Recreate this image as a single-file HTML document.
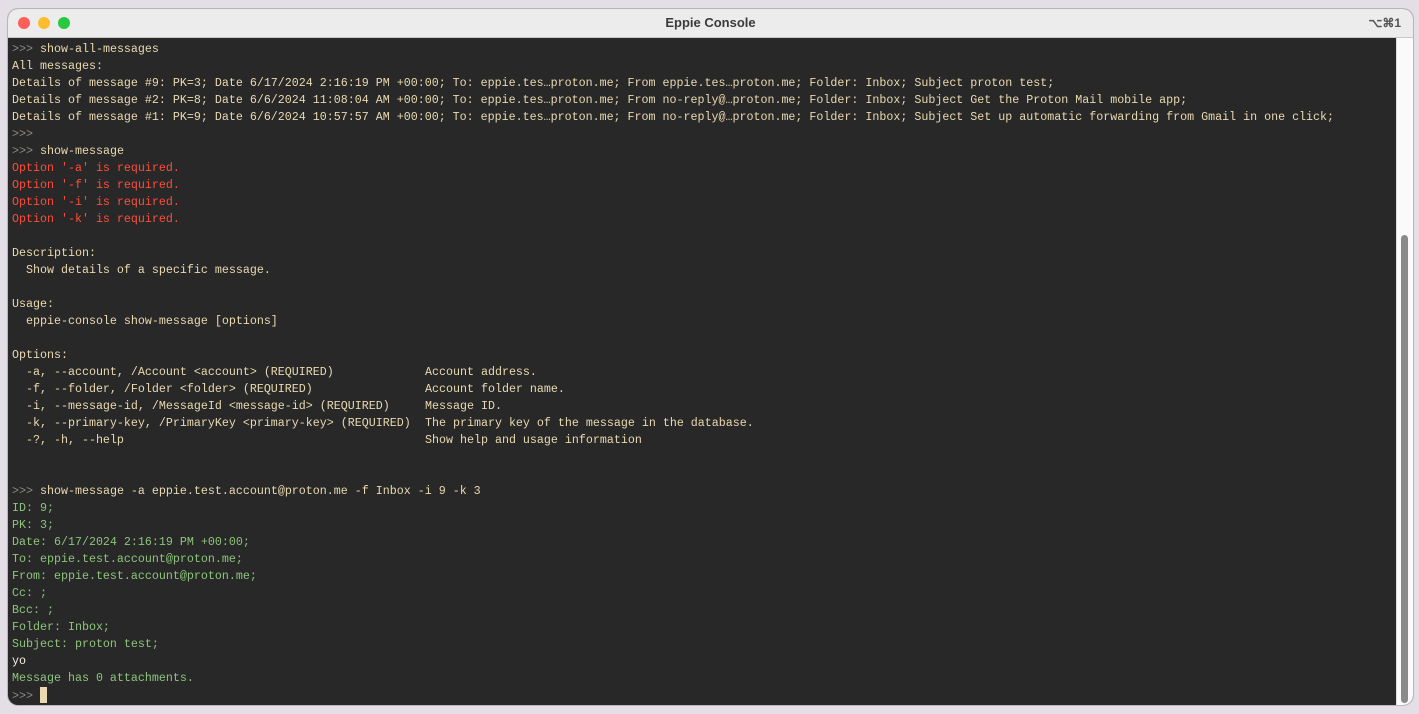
<!DOCTYPE html>
<html><head><meta charset="utf-8"><style>
html,body{margin:0;padding:0;width:1419px;height:714px;overflow:hidden;background:#e4dfe6;}
.win{position:absolute;left:8px;top:9px;width:1405px;height:696px;border-radius:10px;overflow:hidden;background:#282828;box-shadow:0 0 0 1px #b9b6bb;}
.tb{position:absolute;left:0;top:0;right:0;height:28px;background:#ececec;border-bottom:1px solid #c9c9c9;font:bold 13px "Liberation Sans",sans-serif;color:#3a3a3a;text-align:center;line-height:28px;}
.dot{position:absolute;top:8px;width:12px;height:12px;border-radius:50%;}
.sc{position:absolute;right:12px;top:0;font-size:12px;color:#555;}
.term{position:absolute;left:4px;top:32px;font:11.67px/17px "Liberation Mono",monospace;color:#ead9b0;white-space:pre;}
.p{color:#8e8a86}.r{color:#ff4c3b}.g{color:#8cc47b}.w{color:#f6f0e0}
.c{display:inline-block;width:413px}
.sb{position:absolute;right:0;top:29px;width:16px;bottom:0;background:#fafafa;border-left:1px solid #e0e0e0;}
.th{position:absolute;left:4px;width:7px;top:197px;bottom:2px;background:#8a8a8a;border-radius:4px;}
.cur{display:inline-block;width:7px;height:16px;background:#ead9b0;vertical-align:-4px;}
</style></head><body>
<div class="win">
<div class="tb">Eppie Console<div class="dot" style="left:10px;background:#fe5f57"></div><div class="dot" style="left:30px;background:#febc2e"></div><div class="dot" style="left:50px;background:#28c840"></div><span class="sc">⌥⌘1</span></div>
<div class="term"><span class="p">&gt;&gt;&gt;</span> show-all-messages
All messages:
Details of message #9: PK=3; Date 6/17/2024 2:16:19 PM +00:00; To: eppie.tes…proton.me; From eppie.tes…proton.me; Folder: Inbox; Subject proton test;
Details of message #2: PK=8; Date 6/6/2024 11:08:04 AM +00:00; To: eppie.tes…proton.me; From no-reply@…proton.me; Folder: Inbox; Subject Get the Proton Mail mobile app;
Details of message #1: PK=9; Date 6/6/2024 10:57:57 AM +00:00; To: eppie.tes…proton.me; From no-reply@…proton.me; Folder: Inbox; Subject Set up automatic forwarding from Gmail in one click;
<span class="p">&gt;&gt;&gt;</span>
<span class="p">&gt;&gt;&gt;</span> show-message
<span class="r">Option '-a' is required.
Option '-f' is required.
Option '-i' is required.
Option '-k' is required.</span>

Description:
  Show details of a specific message.

Usage:
  eppie-console show-message [options]

Options:
<span class="c">  -a, --account, /Account &lt;account&gt; (REQUIRED)</span>Account address.
<span class="c">  -f, --folder, /Folder &lt;folder&gt; (REQUIRED)</span>Account folder name.
<span class="c">  -i, --message-id, /MessageId &lt;message-id&gt; (REQUIRED)</span>Message ID.
<span class="c">  -k, --primary-key, /PrimaryKey &lt;primary-key&gt; (REQUIRED)</span>The primary key of the message in the database.
<span class="c">  -?, -h, --help</span>Show help and usage information


<span class="p">&gt;&gt;&gt;</span> show-message -a eppie.test.account@proton.me -f Inbox -i 9 -k 3
<span class="g">ID: 9;
PK: 3;
Date: 6/17/2024 2:16:19 PM +00:00;
To: eppie.test.account@proton.me;
From: eppie.test.account@proton.me;
Cc: ;
Bcc: ;
Folder: Inbox;
Subject: proton test;</span>
<span class="w">yo</span>
<span class="g">Message has 0 attachments.</span>
<span class="p">&gt;&gt;&gt;</span> <span class="cur"></span></div>
<div class="sb"><div class="th"></div></div>
</div>
</body></html>
